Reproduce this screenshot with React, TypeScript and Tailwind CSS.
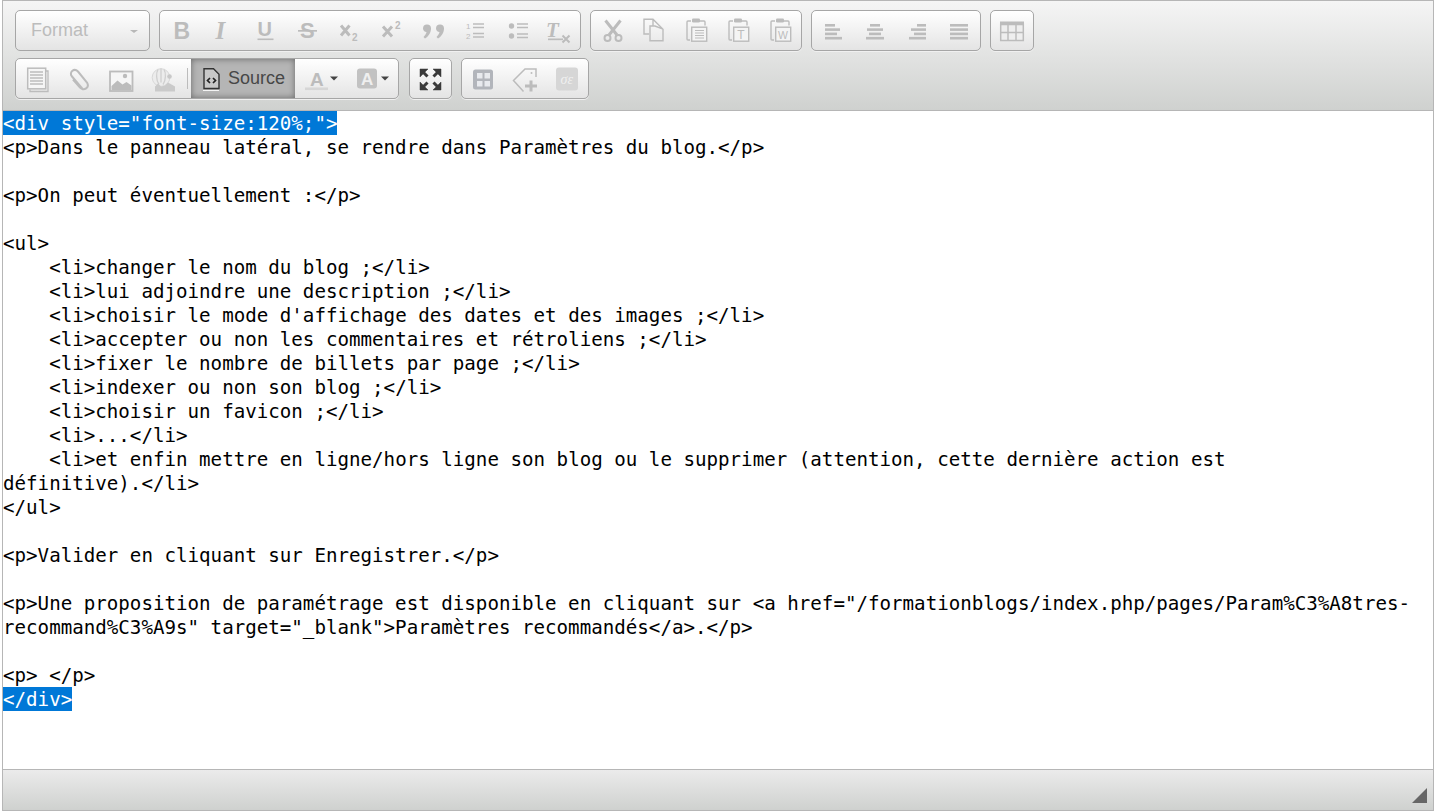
import React from "react";

const C = "#bcbcbc";
const SANS = "Liberation Sans";
const SERIF = "Liberation Serif";

function I({ x, y, w = 34, h = 34, children }: { x: number; y: number; w?: number; h?: number; children: React.ReactNode }) {
  return (
    <svg width={w} height={h} viewBox={`${x - w / 2} ${y - h / 2} ${w} ${h}`} fill="none" className="block shrink-0">
      {children}
    </svg>
  );
}

function Btn({ children, w = "w-[42px]" }: { children: React.ReactNode; w?: string }) {
  return <div className={`${w} h-full flex items-center justify-center shrink-0`}>{children}</div>;
}

function Group({ children, className = "" }: { children: React.ReactNode; className?: string }) {
  return (
    <div className={`h-[41px] flex items-stretch border border-[#a6a6a6] rounded-[5px] bg-gradient-to-b from-white to-[#e4e4e4] shadow-[0_1px_0_#f0f0f0] overflow-hidden shrink-0 ${className}`}>
      {children}
    </div>
  );
}

const Y1 = 30.5;
const Y2 = 78.5;

const Hl = ({ x1, x2, ys, sw = 1.4 }: { x1: number; x2: number; ys: number[]; sw?: number }) => (
  <>
    {ys.map((y) => (
      <path key={y} d={`M${x1} ${y}H${x2}`} stroke={C} strokeWidth={sw} />
    ))}
  </>
);

const Clip = ({ cx, children }: { cx: number; children?: React.ReactNode }) => (
  <I x={cx} y={Y1}>
    <g transform={`translate(${cx - 696} 0)`}>
      <path d="M691 20.5h-3a1 1 0 0 0-1 1v17a1 1 0 0 0 1 1h2" stroke={C} strokeWidth="1.4" />
      <path d="M700 20.5h4a1 1 0 0 1 1 1v3.5" stroke={C} strokeWidth="1.4" />
      <rect x="692" y="18" width="8" height="4" rx="1.2" fill={C} />
      <rect x="691.7" y="26.7" width="15" height="14" fill="#f4f4f4" stroke={C} strokeWidth="1.4" />
      {children}
    </g>
  </I>
);

const Align = ({ cx, rows }: { cx: number; rows: [number, number][] }) => (
  <I x={cx} y={Y1}>
    {rows.map(([a, b], i) => (
      <rect key={i} x={cx + a} y={23.5 + i * 4.3} width={b - a} height="2.6" fill={C} />
    ))}
  </I>
);

const Caret = ({ x, y }: { x: number; y: number }) => <path d={`M${x} ${y}h8l-4 4z`} fill="#444" />;

const Quote = () => (
  <path d="M0 4a4 4 0 1 1 8 0c0 4-2.5 8-6 10L.5 12.5c1.5-1.5 2.8-3.5 3-5A4 4 0 0 1 0 4z" fill={C} />
);

export default function App() {
  return (
    <div className="w-[1434px] h-[811px] pl-[2px] bg-white overflow-hidden">
      <div className="h-full flex flex-col border border-[#b6b6b6] font-['Liberation_Sans',sans-serif]">
        <div className="h-[110px] shrink-0 bg-gradient-to-b from-[#f5f5f5] to-[#cfd1cf] border-b border-[#b6b6b6] pl-3 pt-[9px] flex flex-col gap-[7px]">
          <div className="flex gap-[9px]">
            <div className="w-[135px] h-[41px] flex items-center border border-[#a6a6a6] rounded-[5px] bg-gradient-to-b from-white to-[#e4e4e4] pl-[15px] shrink-0">
              <span className="text-[#bcbcbc] text-[18px]">Format</span>
              <span className="ml-auto mr-[11px] mt-[2px] w-0 h-0 border-x-[4px] border-x-transparent border-t-[3px] border-t-[#b8b8b8]" />
            </div>
            <Group>
              <Btn><I x={181} y={Y1}><text x="173.5" y="38" fontSize="23" fontWeight="700" fontFamily={SANS} fill={C}>B</text></I></Btn>
              <Btn><I x={223} y={Y1}><text x="215.5" y="38" fontSize="25" fontWeight="700" fontStyle="italic" fontFamily={SERIF} fill={C}>I</text></I></Btn>
              <Btn>
                <I x={265} y={Y1}>
                  <text x="257.5" y="35" fontSize="20" fontWeight="700" fontFamily={SANS} fill={C}>U</text>
                  <rect x="257.5" y="38" width="16" height="1.6" fill={C} />
                </I>
              </Btn>
              <Btn>
                <I x={307} y={Y1}>
                  <text x="300" y="37.5" fontSize="22" fontWeight="700" fontFamily={SANS} fill={C}>S</text>
                  <rect x="298" y="29.5" width="19" height="1.7" fill={C} />
                </I>
              </Btn>
              <Btn>
                <I x={349} y={Y1}>
                  <path d="M341 25l8.5 10M349.5 25L341 35" stroke={C} strokeWidth="3" />
                  <text x="352" y="40.5" fontSize="10" fontFamily={SANS} fill={C} fontWeight="700">2</text>
                </I>
              </Btn>
              <Btn>
                <I x={391} y={Y1}>
                  <path d="M383 26l9 10M392 26l-9 10" stroke={C} strokeWidth="3" />
                  <text x="395" y="28" fontSize="10" fontFamily={SANS} fill={C} fontWeight="700">2</text>
                </I>
              </Btn>
              <Btn>
                <I x={433} y={Y1}>
                  <g transform="translate(423 24)"><Quote /></g>
                  <g transform="translate(436 24)"><Quote /></g>
                </I>
              </Btn>
              <Btn>
                <I x={475} y={Y1}>
                  <text x="466" y="28" fontSize="8" fontFamily={SANS} fill={C}>1</text>
                  <text x="466" y="38.5" fontSize="8" fontFamily={SANS} fill={C}>2</text>
                  <Hl x1={473} x2={484} ys={[23.5, 27, 33, 36.5]} />
                </I>
              </Btn>
              <Btn>
                <I x={517} y={Y1}>
                  <circle cx="511.5" cy="25.5" r="2.7" fill={C} />
                  <circle cx="511.5" cy="35.5" r="2.7" fill={C} />
                  <Hl x1={517} x2={528} ys={[23.5, 27, 33.5, 37]} />
                </I>
              </Btn>
              <Btn>
                <I x={559} y={Y1}>
                  <text x="546" y="36.5" fontSize="21" fontWeight="700" fontStyle="italic" fontFamily={SERIF} fill={C}>T</text>
                  <rect x="548" y="38" width="15" height="1.7" fill={C} />
                  <path d="M562.5 35l7 7M569.5 35l-7 7" stroke={C} strokeWidth="2" />
                </I>
              </Btn>
            </Group>
            <Group>
              <Btn>
                <I x={612} y={Y1}>
                  <path d="M605.5 20L617 34.5M620.5 20L609 34.5" stroke={C} strokeWidth="3" />
                  <circle cx="607.5" cy="37.5" r="3" stroke={C} strokeWidth="2" />
                  <circle cx="618.5" cy="37.5" r="3" stroke={C} strokeWidth="2" />
                </I>
              </Btn>
              <Btn>
                <I x={654} y={Y1}>
                  <path d="M649 33.5h-5V18.7h9l10 10v11.6H650V25.5h5l8 3.2M653 19v6" stroke={C} strokeWidth="1.4" />
                </I>
              </Btn>
              <Btn><Clip cx={696}><Hl x1={695} x2={704} ys={[30, 32.5, 35, 37.5]} sw={1.2} /></Clip></Btn>
              <Btn><Clip cx={738}><text x="695.3" y="38.5" fontSize="12" fontFamily={SANS} fill={C}>T</text></Clip></Btn>
              <Btn><Clip cx={780}><text x="694" y="38" fontSize="10.5" fontFamily={SANS} fill={C}>W</text></Clip></Btn>
            </Group>
            <Group>
              <Btn><Align cx={833} rows={[[-8, 2], [-8, 7], [-8, 4], [-8, 9]]} /></Btn>
              <Btn><Align cx={875} rows={[[-5, 5], [-8, 8], [-6, 6], [-9, 9]]} /></Btn>
              <Btn><Align cx={917} rows={[[0, 9], [-6, 9], [-3, 9], [-8, 9]]} /></Btn>
              <Btn><Align cx={959} rows={[[-9, 9], [-9, 9], [-9, 9], [-9, 9]]} /></Btn>
            </Group>
            <Group>
              <Btn>
                <I x={1012} y={Y1}>
                  <rect x="1000" y="21" width="24" height="3" fill={C} />
                  <rect x="1000.7" y="24" width="22.6" height="16" fill="#eee" stroke={C} strokeWidth="1.5" />
                  <path d="M1008 24v16M1016 24v16M1000 32h24" stroke={C} strokeWidth="1.5" />
                </I>
              </Btn>
            </Group>
          </div>
          <div className="flex gap-[9px]">
            <Group>
              <Btn>
                <I x={37} y={Y2}>
                  <path d="M46 70.5h2V91H30v-2" stroke={C} strokeWidth="1.3" />
                  <rect x="27.7" y="67.7" width="18" height="20.6" fill="#f6f6f6" stroke={C} strokeWidth="1.5" />
                  <Hl x1={30} x2={43} ys={[71.5, 74.5, 77.5, 80.5, 83.5]} />
                </I>
              </Btn>
              <Btn>
                <I x={79} y={Y2}>
                  <path d="M83 89L72 76c-3.500-4 2-9 6-5l9 11c3 5-3 9-7 5l-7-8" stroke={C} strokeWidth="2" />
                </I>
              </Btn>
              <Btn>
                <I x={121} y={Y2}>
                  <rect x="110" y="71" width="22.500" height="19.500" fill="#f6f6f6" stroke={C} strokeWidth="1.800" />
                  <path d="M111.500 89.500v-4l6-5.500 5 4 4-2.500 5 3.500v4.500z" fill={C} />
                  <circle cx="125" cy="75.500" r="2.200" fill={C} />
                </I>
              </Btn>
              <Btn>
                <I x={163} y={Y2}>
                  <circle cx="161" cy="77" r="8.800" fill="#ececec" stroke="#d8d8d8" strokeWidth="1" />
                  <path d="M158 69c-2 3-2 11 1 15M164 69c2 3 2 11-1 15M161 68v14" stroke="#cfcfcf" strokeWidth="1.300" />
                  <path d="M155 91v-5l3-3 3 3 4-1 3-3 7 4v5z" fill="#cacaca" />
                  <circle cx="169.500" cy="76" r="2.300" fill="#c8c8c8" />
                </I>
              </Btn>
              <div className="w-px my-[9px] ml-[3px] bg-[#bcbcbc]" />
              <div className="ml-[3px] w-[104px] h-full flex items-center bg-[#b5b5b5] shadow-[inset_0_0_6px_#666] pl-3 shrink-0">
                <svg width="17" height="26" viewBox="203 66 17 26" fill="none" className="block shrink-0">
                  <path d="M204 68.700h9.500l5.500 5.500V88.500H204z" fill="#c8c8c8" stroke="#333" strokeWidth="1.400" />
                  <path d="M210 78l-2.500 2.500 2.500 2.500M213 78l2.500 2.500-2.500 2.500" stroke="#222" strokeWidth="1.700" />
                  <path d="M203 90.500h16" stroke="#f4f4f4" strokeWidth="1" />
                </svg>
                <span className="ml-[8px] text-[18px] text-[#474747]">Source</span>
              </div>
              <Btn w="w-[44px]">
                <I x={317} y={Y2} w={44}>
                  <text x="310" y="85" fontSize="19" fontWeight="700" fontFamily={SANS} fill={C}>A</text>
                  <rect x="305" y="87" width="23" height="2.600" fill="#d6d6d6" />
                  <Caret x={330} y={76} />
                </I>
              </Btn>
              <Btn w="w-[59px]">
                <I x={368.5} y={Y2} w={59}>
                  <rect x="357" y="68" width="20" height="20" rx="3" fill="#c2c2c2" />
                  <text x="361" y="84.500" fontSize="17" fontWeight="700" fontFamily={SANS} fill="#efefef">A</text>
                  <Caret x={381} y={76} />
                </I>
              </Btn>
            </Group>
            <Group className="ml-px">
              <Btn w="w-[41px]">
                <I x={430.5} y={Y2} w={41}>
                  <g fill="#3a3a3a" stroke="#3a3a3a">
                    <path d="M420 68.500h8l-8 8zM441 68.500h-8l8 8zM420 89.500h8l-8-8zM441 89.500h-8l8-8z" strokeWidth="0.500" />
                    <path d="M423 71.500l4.500 4.500M438 71.500L433.500 76M423 86.500l4.500-4.500M438 86.500L433.500 82" strokeWidth="3" />
                  </g>
                </I>
              </Btn>
            </Group>
            <Group>
              <Btn>
                <I x={483} y={Y2}>
                  <rect x="473" y="69" width="20" height="20" rx="2.500" fill="#b2b5bb" />
                  <rect x="477" y="72.500" width="5.500" height="5.500" fill="#e8eaee" />
                  <rect x="484.500" y="72.500" width="5.500" height="5.500" fill="#e8eaee" />
                  <rect x="477" y="80.500" width="5.500" height="5.500" fill="#e8eaee" />
                  <rect x="484.500" y="80.500" width="5.500" height="5.500" fill="#e8eaee" />
                </I>
              </Btn>
              <Btn>
                <I x={525} y={Y2}>
                  <path d="M523.500 91L513.500 80l11.500-11.500h11v8" stroke={C} strokeWidth="1.500" />
                  <circle cx="531.500" cy="72.500" r="1" fill={C} />
                  <path d="M531 80v11M525 85.500h12" stroke={C} strokeWidth="3" />
                </I>
              </Btn>
              <Btn>
                <I x={567} y={Y2}>
                  <rect x="556" y="67" width="22" height="23" rx="3" fill="#d6d6d6" />
                  <text x="560.500" y="83" fontSize="14" fontStyle="italic" fontFamily={SERIF} fill="#f0f0f0">σε</text>
                </I>
              </Btn>
            </Group>
          </div>
        </div>
        <div className="flex-1 bg-white text-black whitespace-pre-wrap font-['DejaVu_Sans_Mono',monospace] text-[19.17px] leading-[24px] overflow-hidden pt-px pr-[4px]">
          <span className="inline-block h-[23px] bg-[#0078d7] text-white shadow-[0_-1px_0_#0078d7]">{'<div style="font-size:120%;">'}</span>
          {`
<p>Dans le panneau latéral, se rendre dans Paramètres du blog.</p>

<p>On peut éventuellement :</p>

<ul>
    <li>changer le nom du blog ;</li>
    <li>lui adjoindre une description ;</li>
    <li>choisir le mode d'affichage des dates et des images ;</li>
    <li>accepter ou non les commentaires et rétroliens ;</li>
    <li>fixer le nombre de billets par page ;</li>
    <li>indexer ou non son blog ;</li>
    <li>choisir un favicon ;</li>
    <li>...</li>
    <li>et enfin mettre en ligne/hors ligne son blog ou le supprimer (attention, cette dernière action est
définitive).</li>
</ul>

<p>Valider en cliquant sur Enregistrer.</p>

<p>Une proposition de paramétrage est disponible en cliquant sur <a href="/formationblogs/index.php/pages/Param%C3%A8tres-recommand%C3%A9s" target="_blank">Paramètres recommandés</a>.</p>

<p>\u00a0</p>
`}
          <span className="inline-block h-[23px] bg-[#0078d7] text-white shadow-[0_-1px_0_#0078d7]">{"</div>"}</span>
        </div>
        <div className="h-[41px] shrink-0 bg-gradient-to-b from-[#ebebeb] to-[#cfd1cf] border-t border-[#b6b6b6] flex items-end justify-end pr-[6px] pb-[7px]">
          <div className="w-0 h-0 border-l-[15px] border-l-transparent border-b-[15px] border-b-[#666]" />
        </div>
      </div>
    </div>
  );
}
